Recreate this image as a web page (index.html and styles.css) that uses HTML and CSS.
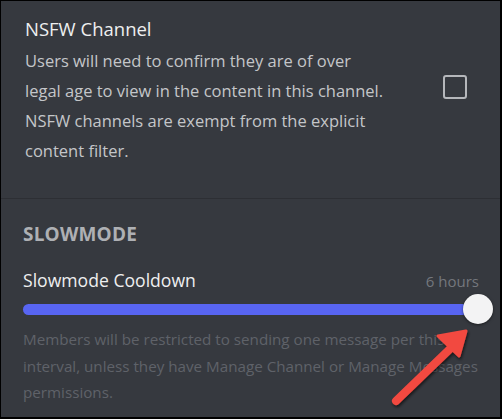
FILE: index.html
```html
<!DOCTYPE html>
<html>
<head>
<meta charset="utf-8">
<link rel="stylesheet" href="styles.css">
</head>
<body>
<div class="frame">
  <section class="nsfw">
    <div class="nsfw-text">
      <h2 class="title">NSFW Channel</h2>
      <p class="desc">Users will need to confirm they are of over<br>legal age to view in the content in this channel.<br>NSFW channels are exempt from the explicit<br>content filter.</p>
    </div>
    <div class="checkbox"></div>
  </section>
  <div class="divider"></div>
  <section class="slow">
    <h3 class="header">SLOWMODE</h3>
    <div class="row">
      <span class="label">Slowmode Cooldown</span>
      <span class="value">6 hours</span>
    </div>
    <div class="slider">
      <div class="track"></div>
      <div class="knob"></div>
    </div>
    <p class="help">Members will be restricted to sending one message per this<br>interval, unless they have Manage Channel or Manage Messages<br>permissions.</p>
  </section>
  <svg class="arrow" width="100" height="90" viewBox="0 0 100 90">
    <defs>
      <filter id="sh" x="-20%" y="-20%" width="150%" height="150%">
        <feDropShadow dx="1" dy="2" stdDeviation="1.5" flood-color="#000" flood-opacity="0.6"/>
      </filter>
    </defs>
    <g filter="url(#sh)" fill="#f24a40" stroke="#f24a40" stroke-linejoin="round" stroke-linecap="round">
      <line x1="15" y1="80" x2="72" y2="25" stroke-width="8"/>
      <polygon points="85,10 57,15 78,35" stroke-width="3"/>
    </g>
  </svg>
</div>
</body>
</html>
```
FILE: styles.css
```css
* { box-sizing: border-box; }
html, body { margin: 0; padding: 0; background: #000; }
.frame {
  position: relative;
  width: 502px;
  height: 419px;
  background: #36393f;
  border-style: solid;
  border-color: #000;
  border-width: 1px 2px 2px 1px;
  font-family: "Open Sans", "Noto Sans", sans-serif;
  overflow: hidden;
}
.nsfw {
  display: flex;
  align-items: center;
  justify-content: space-between;
  height: 197px;
  padding: 0 33px 16px 24px;
}
.title {
  margin: 0;
  font-size: 18.5px;
  font-weight: 500;
  line-height: 24px;
  color: #eeeff0;
}
.desc {
  margin: 5px 0 0;
  font-size: 16.5px;
  line-height: 30px;
  color: #c4c6c9;
  white-space: nowrap;
}
.checkbox {
  width: 24px;
  height: 24px;
  border: 2px solid #b5b7bb;
  border-radius: 3px;
  margin-bottom: 10px;
}
.divider {
  height: 1px;
  background: #2d2f34;
}
.slow {
  padding: 0 22px 0 22px;
}
.header {
  margin: 23px 0 0;
  font-size: 19px;
  font-weight: 700;
  letter-spacing: 0.2px;
  line-height: 24px;
  color: #aeb0b4;
}
.row {
  display: flex;
  justify-content: space-between;
  align-items: baseline;
  margin-top: 23px;
  margin-right: -1px;
}
.label {
  font-size: 17.6px;
  line-height: 22px;
  color: #eeeff0;
}
.value {
  font-size: 15px;
  color: #74777d;
}
.slider {
  position: relative;
  height: 30px;
  margin-top: 3px;
  display: flex;
  align-items: center;
}
.track {
  flex: 1;
  height: 11px;
  border-radius: 6px;
  background: #5865f2;
  margin-right: 10px;
}
.knob {
  position: absolute;
  right: -15px;
  top: 0;
  width: 30px;
  height: 30px;
  border-radius: 50%;
  background: #f3f3f4;
  box-shadow: 0 1px 3px rgba(0,0,0,0.5);
}
.help {
  margin: 2px 0 0;
  font-size: 15.2px;
  line-height: 26.5px;
  color: #5f6269;
  white-space: nowrap;
}
.arrow {
  position: absolute;
  left: 380px;
  top: 320px;
}
```
